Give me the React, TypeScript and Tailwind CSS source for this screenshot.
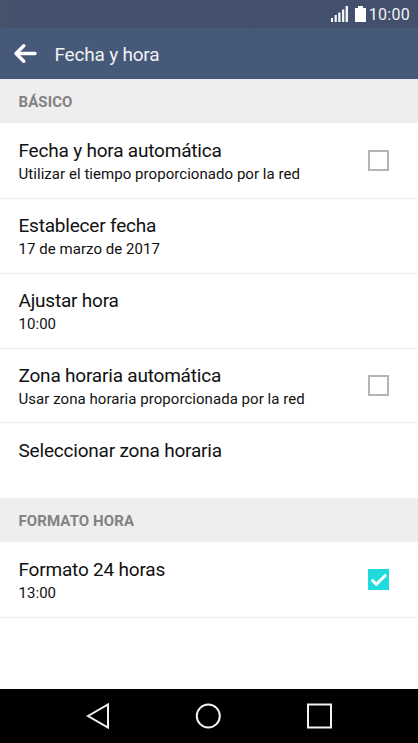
const BackArrow = () => {
  return (
    <svg width="24" height="22" viewBox="0 0 24 22" fill="none">
      <path
        d="M10.8 2.8 L3 10.5 L10.8 18.2 M3.4 10.5 H22"
        stroke="#fff"
        strokeWidth="3.4"
        strokeLinecap="round"
        strokeLinejoin="round"
      />
    </svg>
  );
};

const Checkbox = ({ checked }: { checked: boolean }) => {
  if (!checked) {
    return <div className="size-[21px] border-2 border-[#b4b4b4] bg-white" />;
  }
  return (
    <div className="size-[21px] bg-[#20dbdb]">
      <svg width="21" height="21" viewBox="0 0 21 21" fill="none">
        <path d="M3.8 10.8 L8.3 15.4 L18 5.8" stroke="#fff" strokeWidth="3" />
      </svg>
    </div>
  );
};

const StatusBar = () => {
  return (
    <div className="flex h-7 items-center justify-end bg-[#42506d] bg-linear-to-r from-[#46536d] to-[#42506d] to-5% pr-[8px] text-white">
      <svg width="17" height="16" viewBox="0 0 17 16" fill="#f4f5f8">
        <rect x="0" y="12" width="2" height="4" />
        <rect x="3.6" y="9" width="2.2" height="7" />
        <rect x="7.2" y="6.5" width="2.3" height="9.5" />
        <rect x="11" y="3.5" width="2.3" height="12.5" />
        <rect x="14.6" y="0" width="2.4" height="16" />
      </svg>
      <svg
        className="ml-[7px]"
        width="11"
        height="16"
        viewBox="0 0 11 16"
        fill="#fff"
      >
        <path d="M3 0 H8 V2 H11 V16 H0 V2 H3 Z" />
      </svg>
      <p className="ml-[3px] mt-[2px] text-[16px] leading-5 tracking-[0.3px] text-[#f0f2f5]">
        10:00
      </p>
    </div>
  );
};

const SectionTitle = ({ text }: { text: string }) => {
  return (
    <div className="flex h-11 items-center bg-[#eeeeee] pl-[18.5px] pt-0.5">
      <p className="text-[15px] font-bold leading-5 tracking-[0.1px] text-[#828282]">
        {text}
      </p>
    </div>
  );
};

type RowProps = {
  title: string;
  detail?: string;
  checked?: boolean;
  className: string;
};

const Row = ({ title, detail, checked, className }: RowProps) => {
  return (
    <div
      className={`flex items-start justify-between border-[#eeeeee] pl-[18.5px] pr-[29px] ${className}`}
    >
      <div>
        <p className="whitespace-nowrap text-[19px] leading-6 tracking-[-0.2px]">
          {title}
        </p>
        {detail && (
          <p className="whitespace-nowrap text-[15px] leading-[23px] tracking-[0.05px]">
            {detail}
          </p>
        )}
      </div>
      {checked !== undefined && (
        <div className="pt-[11px]">
          <Checkbox checked={checked} />
        </div>
      )}
    </div>
  );
};

const basicRows = [
  {
    title: "Fecha y hora automática",
    detail: "Utilizar el tiempo proporcionado por la red",
    checked: false,
    className: "h-[76px] border-b pt-4",
  },
  {
    title: "Establecer fecha",
    detail: "17 de marzo de 2017",
    className: "h-[75px] border-b pt-[15px]",
  },
  {
    title: "Ajustar hora",
    detail: "10:00",
    className: "h-[75px] border-b pt-[15px]",
  },
  {
    title: "Zona horaria automática",
    detail: "Usar zona horaria proporcionada por la red",
    checked: false,
    className: "h-[74px] border-b pt-[15px]",
  },
  {
    title: "Seleccionar zona horaria",
    className: "h-[75px] pt-4",
  },
];

const NavBar = () => {
  return (
    <div className="flex h-[54px] items-center bg-black pl-[86px]">
      <svg width="24" height="28" viewBox="0 0 24 28" fill="none">
        <path d="M2 14 L22 2.5 V25.5 Z" stroke="#f2f2f2" strokeWidth="2" />
      </svg>
      <svg
        className="ml-[84px]"
        width="28"
        height="28"
        viewBox="0 0 28 28"
        fill="none"
      >
        <circle cx="14.3" cy="14" r="11.5" stroke="#f2f2f2" strokeWidth="2" />
      </svg>
      <svg
        className="ml-[84px]"
        width="26"
        height="28"
        viewBox="0 0 26 28"
        fill="none"
      >
        <rect
          x="2"
          y="2.5"
          width="23"
          height="23"
          stroke="#f2f2f2"
          strokeWidth="2"
        />
      </svg>
    </div>
  );
};

const App = () => {
  return (
    <div className="flex h-screen flex-col overflow-hidden bg-white font-['Roboto',sans-serif] text-[#111111]">
      <StatusBar />
      <div className="flex h-[51px] items-center bg-[#465978] pl-[13px]">
        <BackArrow />
        <p className="ml-[17.5px] mt-[2px] text-[19px] leading-6 tracking-[-0.2px] text-[#f0f2f5]">
          Fecha y hora
        </p>
      </div>
      <div className="flex-1">
        <SectionTitle text="BÁSICO" />
        {basicRows.map((row) => (
          <Row key={row.title} {...row} />
        ))}
        <SectionTitle text="FORMATO HORA" />
        <Row
          title="Formato 24 horas"
          detail="13:00"
          checked={true}
          className="h-[76px] border-b pt-4"
        />
      </div>
      <NavBar />
    </div>
  );
};

export default App;
